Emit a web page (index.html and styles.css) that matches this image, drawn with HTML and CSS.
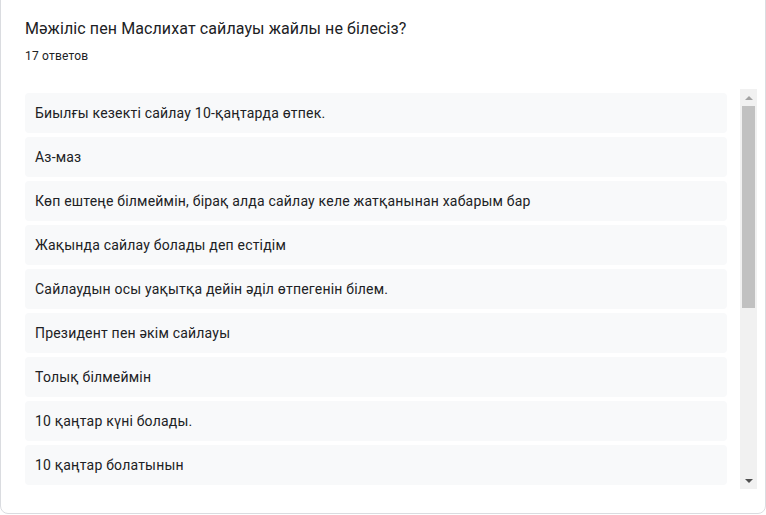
FILE: index.html
```
<!DOCTYPE html>
<html lang="kk">
<head>
<meta charset="utf-8">
<title>Ответы</title>
<link rel="stylesheet" href="styles.css">
</head>
<body>
<div class="card">
  <div class="title">Мәжіліс пен Маслихат сайлауы жайлы не білесіз?</div>
  <div class="count">17 ответов</div>
  <div class="answers">
    <div class="list">
      <div class="item">Биылғы кезекті сайлау 10-қаңтарда өтпек.</div>
      <div class="item">Аз-маз</div>
      <div class="item">Көп ештеңе білмеймін, бірақ алда сайлау келе жатқанынан хабарым бар</div>
      <div class="item">Жақында сайлау болады деп естідім</div>
      <div class="item">Сайлаудын осы уақытқа дейін әділ өтпегенін білем.</div>
      <div class="item">Президент пен әкім сайлауы</div>
      <div class="item">Толық білмеймін</div>
      <div class="item">10 қаңтар күні болады.</div>
      <div class="item">10 қаңтар болатынын</div>
    </div>
    <div class="scrollbar">
      <div class="sb-btn"><span class="arrow-up"></span></div>
      <div class="sb-thumb"></div>
      <div class="sb-space"></div>
      <div class="sb-btn"><span class="arrow-down"></span></div>
    </div>
  </div>
</div>
</body>
</html>
```
FILE: styles.css
```
html, body {
  margin: 0;
  padding: 0;
  background: #ffffff;
  overflow: hidden;
}
body {
  font-family: Roboto, "Noto Sans", Arial, sans-serif;
  color: #202124;
}
.card {
  margin-top: -10px;
  width: 766px;
  box-sizing: border-box;
  background: #fff;
  border: 1px solid #dadce0;
  border-radius: 8px;
  padding: 26px 8px 24px 24px;
}
.title {
  font-size: 16px;
  line-height: 24px;
  letter-spacing: 0.1px;
}
.count {
  margin-top: 7px;
  font-size: 12px;
  line-height: 16px;
  letter-spacing: 0.2px;
}
.answers {
  margin-top: 25px;
  display: flex;
  gap: 13px;
  height: 400px;
}
.list {
  flex: 1;
  overflow: hidden;
}
.item {
  margin-top: 4px;
  height: 40px;
  line-height: 40px;
  padding: 0 10px;
  background: #f8f9fa;
  border-radius: 4px;
  font-size: 14px;
  letter-spacing: 0.2px;
  white-space: nowrap;
  overflow: hidden;
}
.scrollbar {
  width: 17px;
  background: #f1f1f1;
  display: flex;
  flex-direction: column;
}
.sb-btn {
  height: 17px;
  display: flex;
  align-items: center;
  justify-content: center;
}
.arrow-up {
  width: 0;
  height: 0;
  border-left: 4px solid transparent;
  border-right: 4px solid transparent;
  border-bottom: 4px solid #a3a3a3;
}
.arrow-down {
  width: 0;
  height: 0;
  border-left: 4px solid transparent;
  border-right: 4px solid transparent;
  border-top: 4px solid #505050;
}
.sb-thumb {
  height: 202px;
  margin: 0 2px;
  background: #c1c1c1;
}
.sb-space {
  flex: 1;
}
```
